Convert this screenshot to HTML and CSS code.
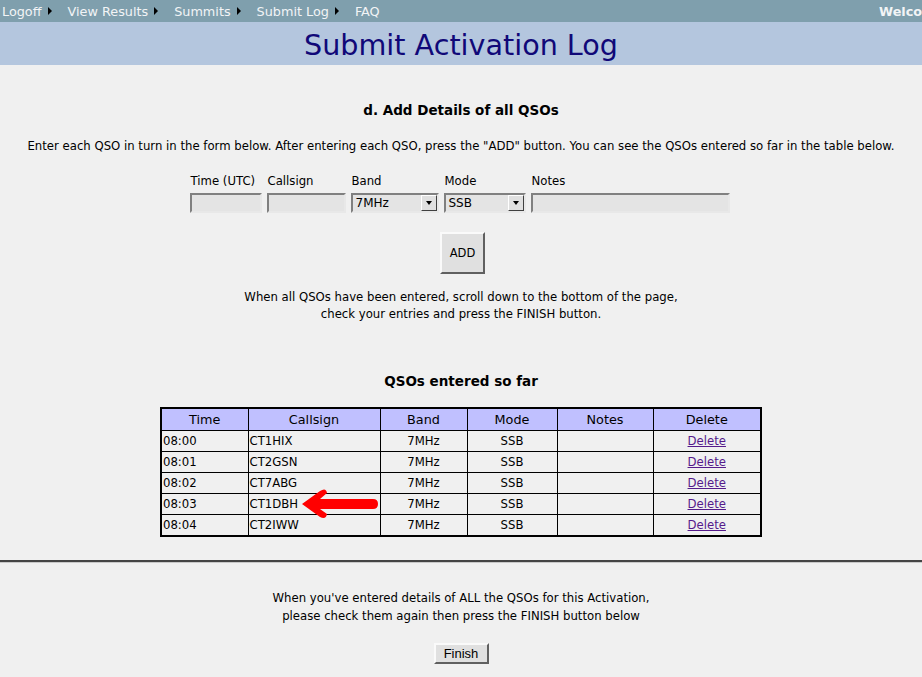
FILE: index.html
```html
<!DOCTYPE html>
<html>
<head>
<meta charset="utf-8">
<link rel="stylesheet" href="styles.css">
</head>
<body>
<div class="nav">
  <div class="nav-links">
    <span class="nav-item">Logoff<span class="tri"></span></span>
    <span class="nav-item">View Results<span class="tri"></span></span>
    <span class="nav-item">Summits<span class="tri"></span></span>
    <span class="nav-item">Submit Log<span class="tri"></span></span>
    <span class="nav-item">FAQ</span>
  </div>
  <div class="welcome">Welcome</div>
</div>
<div class="titlebar"><h1>Submit Activation Log</h1></div>
<div class="main">
  <h2 class="step">d. Add Details of all QSOs</h2>
  <p class="intro">Enter each QSO in turn in the form below. After entering each QSO, press the "ADD" button. You can see the QSOs entered so far in the table below.</p>
  <div class="form">
    <div class="field"><label>Time (UTC)</label><span class="input w-time"></span></div>
    <div class="field"><label>Callsign</label><span class="input w-call"></span></div>
    <div class="field"><label>Band</label><span class="select w-band"><span class="val">7MHz</span><span class="drop"></span></span></div>
    <div class="field"><label>Mode</label><span class="select w-mode"><span class="val">SSB</span><span class="drop"></span></span></div>
    <div class="field"><label>Notes</label><span class="input w-notes"></span></div>
  </div>
  <div class="addrow"><span class="btn add">ADD</span></div>
  <p class="note">When all QSOs have been entered, scroll down to the bottom of the page,<br>check your entries and press the FINISH button.</p>
  <h2 class="sofar">QSOs entered so far</h2>
  <div class="tablewrap">
    <table class="qsos">
      <colgroup><col class="c1"><col class="c2"><col class="c3"><col class="c4"><col class="c5"><col class="c6"></colgroup>
      <tr><th>Time</th><th>Callsign</th><th>Band</th><th>Mode</th><th>Notes</th><th>Delete</th></tr>
      <tr><td>08:00</td><td>CT1HIX</td><td class="ctr">7MHz</td><td class="ctr">SSB</td><td></td><td class="ctr"><a>Delete</a></td></tr>
      <tr><td>08:01</td><td>CT2GSN</td><td class="ctr">7MHz</td><td class="ctr">SSB</td><td></td><td class="ctr"><a>Delete</a></td></tr>
      <tr><td>08:02</td><td>CT7ABG</td><td class="ctr">7MHz</td><td class="ctr">SSB</td><td></td><td class="ctr"><a>Delete</a></td></tr>
      <tr><td>08:03</td><td>CT1DBH</td><td class="ctr">7MHz</td><td class="ctr">SSB</td><td></td><td class="ctr"><a>Delete</a></td></tr>
      <tr><td>08:04</td><td>CT2IWW</td><td class="ctr">7MHz</td><td class="ctr">SSB</td><td></td><td class="ctr"><a>Delete</a></td></tr>
    </table>
    <svg class="arrow" width="82" height="34" viewBox="0 0 82 34">
      <path d="M3 17 L21 4 Q27 0 28 6 L21 12 L74 12 Q79 12 79 17 Q79 22 74 22 L21 22 L28 27 Q27 33 21 30 Z" fill="#ff0000"/>
    </svg>
  </div>
</div>
<hr class="sep">
<div class="footer">
  <p class="finishnote">When you've entered details of ALL the QSOs for this Activation,<br>please check them again then press the FINISH button below</p>
  <span class="btn finish">Finish</span>
</div>
</body>
</html>
```
FILE: styles.css
```css
html, body { margin: 0; padding: 0; }
body {
  background: #f0f0f0;
  font-family: "DejaVu Sans", Verdana, sans-serif;
  font-size: 11.7px;
  color: #000;
  width: 922px;
  height: 677px;
  overflow: hidden;
}
.nav {
  height: 22px;
  background: #7f9fad;
  display: flex;
  justify-content: space-between;
  align-items: center;
  color: #f2f4f6;
  font-size: 12.8px;
  white-space: nowrap;
  overflow: hidden;
}
.nav-links { display: flex; padding-left: 2px; }
.nav-item { display: inline-flex; align-items: center; margin-right: 16px; }
.tri {
  display: inline-block;
  width: 0; height: 0;
  border-top: 4px solid transparent;
  border-bottom: 4px solid transparent;
  border-left: 4px solid #000;
  margin-left: 6px;
}
.welcome { font-weight: bold; width: 43px; overflow: hidden; }
.titlebar {
  height: 43px;
  background: #b4c6de;
  display: flex;
  justify-content: center;
  align-items: center;
}
.titlebar h1 {
  margin: 0;
  font-weight: normal;
  font-size: 28.6px;
  color: #100878;
  position: relative;
  top: 1px;
}
.main { display: flex; flex-direction: column; align-items: center; }
.step { font-size: 13.5px; margin: 37px 0 0; font-weight: bold; }
.intro { margin: 21px 0 0; }
.form { display: flex; gap: 5px; margin-top: 21px; margin-left: -3px; }
.field { display: flex; flex-direction: column; }
.field label { height: 14px; line-height: 14px; margin-left: 1px; margin-bottom: 5px; }
.input, .select {
  height: 20px;
  box-sizing: border-box;
  background: #e4e4e4;
  border: 2px solid;
  border-color: #808080 #e8e8e8 #e8e8e8 #808080;
  display: flex;
  align-items: center;
}
.w-time { width: 72px; }
.w-call { width: 79px; }
.w-band { width: 88px; }
.w-mode { width: 82px; }
.w-notes { width: 199px; }
.select { justify-content: space-between; padding-left: 3px; }
.select .val { font-size: 12px; }
.drop {
  width: 16px; height: 16px; box-sizing: border-box;
  background: #e0e0e0;
  border: 1px solid; border-color: #fff #404040 #404040 #fff;
  position: relative;
}
.drop::after {
  content: ""; position: absolute; left: 4px; top: 5px;
  border-left: 3px solid transparent; border-right: 3px solid transparent; border-top: 4px solid #000;
}
.addrow { margin-top: 19px; }
.btn {
  display: inline-flex; align-items: center; justify-content: center;
  box-sizing: border-box;
  background: #e0e0e0;
  border: 2px solid; border-color: #fafafa #606060 #606060 #fafafa;
  font-family: "Liberation Sans", Arial, sans-serif;
}
.add { width: 45px; height: 42px; font-family: "DejaVu Sans", sans-serif; font-size: 11.5px; margin-left: 3px; }
.note { text-align: center; margin: 15px 0 0; line-height: 17px; }
.sofar { font-size: 13.5px; margin: 50px 0 0; font-weight: bold; }
.tablewrap { position: relative; margin-top: 18px; }
.qsos {
  border-collapse: collapse;
  border: 2px solid #000;
  width: 600px;
  table-layout: fixed;
}
.c1 { width: 87px; } .c2 { width: 132px; } .c3 { width: 87px; } .c4 { width: 90px; } .c5 { width: 96px; } .c6 { width: 108px; }
.qsos th {
  background: #c0c0ff;
  border: 1px solid #000;
  height: 21px; padding: 0;
  font-size: 12.8px; font-weight: normal;
}
.qsos td {
  border: 1px solid #000;
  height: 20px; padding: 0 1px;
  font-size: 11.7px;
}
.qsos td.ctr { text-align: center; }
.qsos a { color: #551a8b; text-decoration: underline; }
.arrow { position: absolute; left: 139px; top: 80px; }
.sep {
  margin: 23px 0 0;
  border: 0;
  border-top: 2px solid #444;
  border-bottom: 1px solid #c8c8c8;
  height: 0;
}
.footer { display: flex; flex-direction: column; align-items: center; }
.finishnote { text-align: center; margin: 26px 0 0; line-height: 18px; }
.finish { width: 55px; height: 21px; font-size: 13px; margin-top: 18px; }
```
